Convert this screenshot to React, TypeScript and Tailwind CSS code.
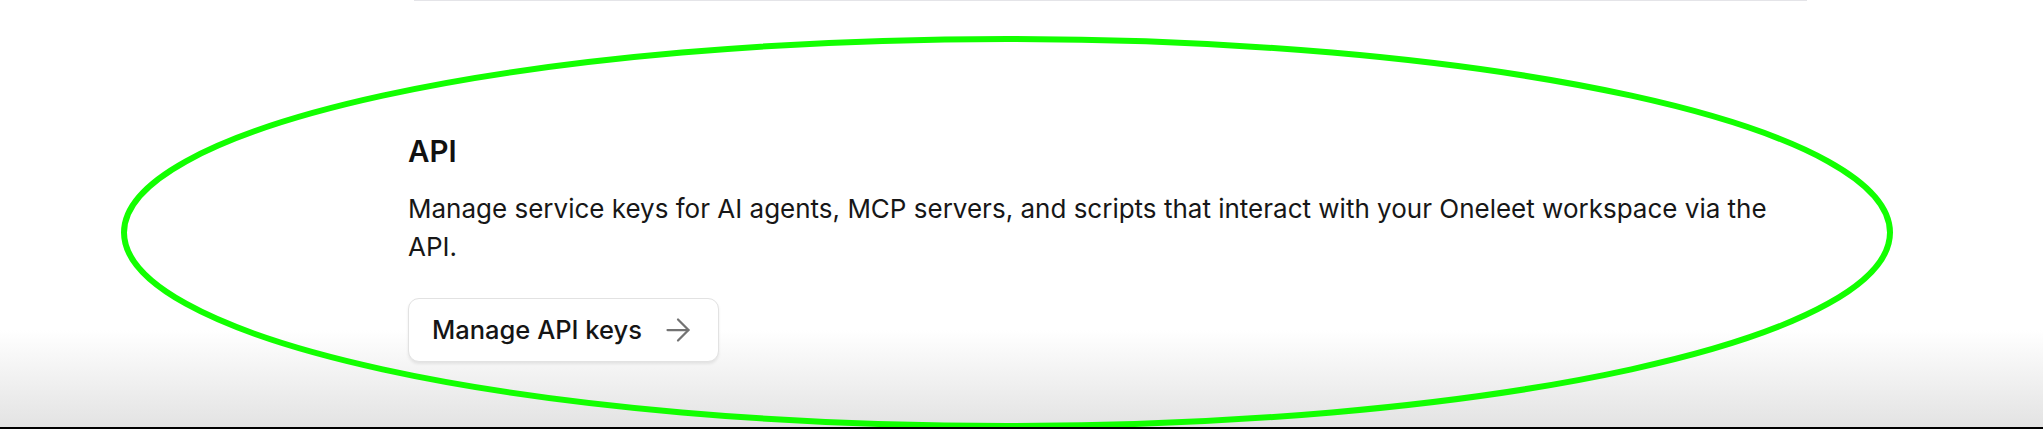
import React from 'react'
import { ArrowRight } from 'lucide-react'

// ── Highlight ring drawn over the section ─────────────────────────────────────

function HighlightRing() {
  return (
    <svg
      className="pointer-events-none absolute left-0 top-0"
      width={2043}
      height={429}
      viewBox="0 0 2043 429"
      fill="none"
    >
      <ellipse cx={1007} cy={232.5} rx={883} ry={193.5} stroke="#12ff00" strokeWidth={6} />
    </svg>
  )
}

// ── API section ───────────────────────────────────────────────────────────────

function ApiSection() {
  return (
    <section className="w-[1406px]">
      <h2 className="text-[29.5px] leading-[40px] font-semibold text-[#111111]">API</h2>
      <p className="mt-[19px] text-[26px] leading-[38px] text-[#171717]">
        Manage service keys for AI agents, MCP servers, and scripts that interact with your Oneleet workspace via the
        API.
      </p>
      <button className="mt-[32px] flex h-[64px] items-center rounded-[11px] border border-[#e2e2e2] bg-white pl-[23px] pr-[22px] shadow-[0_2px_3px_rgba(0,0,0,0.08)]">
        <span className="text-[25.5px] font-medium text-[#151515]">Manage API keys</span>
        <ArrowRight size={36} strokeWidth={1.5} className="ml-[18px] text-[#737373]" />
      </button>
    </section>
  )
}

export default function App() {
  return (
    <div
      className="relative h-[429px] w-[2043px] overflow-hidden border-b-2 border-black bg-[linear-gradient(to_bottom,#ffffff_0px,#ffffff_330px,#e3e3e3_427px)]"
      style={{ fontFamily: 'Inter, "Noto Sans", sans-serif' }}
    >
      <div className="ml-[414px] h-px w-[1393px] bg-[#e4e4e8]" />
      <div className="ml-[408px] mt-[130px]">
        <ApiSection />
      </div>
      <HighlightRing />
    </div>
  )
}
